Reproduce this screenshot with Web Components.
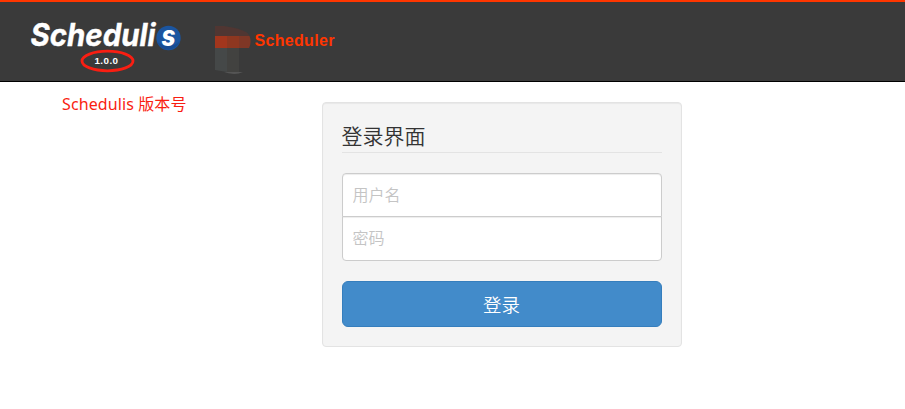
<!DOCTYPE html>
<html lang="zh-CN">
<head>
<meta charset="utf-8">
<title>Schedulis</title>
<style>
body{margin:0;background:#fff;font-family:"Liberation Sans","Noto Sans CJK SC",sans-serif}
</style>
</head>
<body>
<login-page></login-page>
<script>
const define = (name, html) => customElements.define(name, class extends HTMLElement {
  constructor() {
    super();
    const t = document.createElement('template');
    t.innerHTML = html;
    this.attachShadow({mode: 'open'}).append(t.content.cloneNode(true));
    const input = this.shadowRoot.querySelector('input');
    if (input) {
      input.placeholder = this.getAttribute('placeholder') || '';
      input.type = this.getAttribute('type') || 'text';
    }
  }
});

define('brand-logo', `<style>
:host{display:block;width:160px;height:70px}svg{display:block;overflow:visible}
</style>
<svg width="160" height="70" viewBox="26 6 160 70">
<circle cx="168.500" cy="38" r="12.200" fill="#1b55a0"/>
<path d="M157 42a12.200 12.200 0 0 0 23-1c-6 6-14 7-23 1z" fill="#17468a" opacity=".6"/>
<text x="30.500" y="45.700" font-family="Inter" font-weight="700" font-style="italic" font-size="31" fill="#fff" stroke="#fff" stroke-width=".4" textLength="125" lengthAdjust="spacingAndGlyphs">Scheduli</text>
<text x="161.500" y="45.500" font-family="Inter" font-weight="800" font-style="italic" font-size="28" fill="#fff" textLength="14" lengthAdjust="spacingAndGlyphs">s</text>
<ellipse cx="107.500" cy="61" rx="25.500" ry="9.800" fill="none" stroke="#f91e12" stroke-width="2.800"/>
<text x="94.500" y="64.200" font-family="Liberation Sans" font-weight="700" font-size="9.800" fill="#fff" textLength="23.500">1.0.0</text>
</svg>`);

define('scheduler-mark', `<style>
:host{display:block;width:36px;height:50px}svg{display:block}
</style>
<svg width="36" height="50" viewBox="0 0 36 50">
<path d="M0 0H9Q24 2 31 6Q34 8 34.500 10H0z" fill="#503632"/>
<path d="M0 10H12V22H0z" fill="#a2361d"/><path d="M12 10H24V22H12z" fill="#8e3720"/>
<path d="M24 10H34.500Q37 16 34 22H24z" fill="#7f3726"/>
<path d="M0 22H12V46L0 44z" fill="#454848"/><path d="M12 22H24V46H12z" fill="#424240"/>
<path d="M9 46H28Q24 48 19 48Q13 47.500 9 46z" fill="#555"/>
</svg>`);

define('site-header', `<style>
:host{display:flex;align-items:flex-start;box-sizing:border-box;height:82px;background:#3a3a3a;border-top:2px solid #ff3600;border-bottom:1px solid #000;padding-left:26px}
brand-logo{margin-top:4px}scheduler-mark{margin:24px 0 0 29px}
.t{margin:30px 0 0 3.500px;font:700 16px/18px "Liberation Sans",sans-serif;letter-spacing:.32px;color:#ff3600}
</style><brand-logo></brand-logo><scheduler-mark></scheduler-mark><div class="t"><slot></slot></div>`);

define('form-field', `<style>
:host{display:block}
input{display:block;box-sizing:border-box;width:100%;height:var(--h);margin:0;border:1px solid #ccc;border-radius:var(--r);padding:var(--pt) 9.500px 0;background:#fff;box-shadow:inset 0 1px 1px rgba(0,0,0,.075);font:16px "Liberation Sans","Noto Sans CJK SC",sans-serif;outline:0}
input::placeholder{color:#c4c4c4;opacity:1;font-weight:350}
</style><input>`);

define('submit-button', `<style>
:host{display:block}
button{display:block;box-sizing:border-box;width:100%;height:46px;border:1px solid #357ebd;border-radius:6px;background:#428bca;color:#fff;padding:0 1px 1px 0;font:350 18.500px/26px "Noto Sans CJK SC",sans-serif}
</style><button><slot></slot></button>`);

define('login-card', `<style>
:host{display:block;box-sizing:border-box;width:360px;height:245px;padding:19px;background:#f4f4f4;border:1px solid #e3e3e3;border-radius:4px;box-shadow:inset 0 1px 1px rgba(0,0,0,.05)}
h3{box-sizing:border-box;height:31px;margin:0 0 20px;border-bottom:1px solid #e3e3e3;font:350 21px/26px "Noto Sans CJK SC",sans-serif;color:#333;text-indent:-.5px}
.first{--r:4px 4px 0 0;--h:44px;--pt:2px}.second{--r:0 0 4px 4px;--h:45px;--pt:0px;margin-top:-1px}
submit-button{margin-top:20px}
</style><h3><slot></slot></h3>
<form-field class="first" placeholder="用户名"></form-field>
<form-field class="second" type="password" placeholder="密码"></form-field>
<submit-button>登录</submit-button>`);

define('login-page', `<style>
:host{display:block;height:409px;overflow:hidden}
main{display:flex;align-items:flex-start}
.note{width:260px;margin:10px 0 0 62px;font:400 16px/24px "Noto Sans","Noto Sans CJK SC",sans-serif;letter-spacing:.1px;color:#f91e12;white-space:nowrap}
login-card{margin-top:20px}
</style><site-header>Scheduler</site-header>
<main><div class="note">Schedulis 版本号</div><login-card>登录界面</login-card></main>`);
</script>
</body>
</html>
